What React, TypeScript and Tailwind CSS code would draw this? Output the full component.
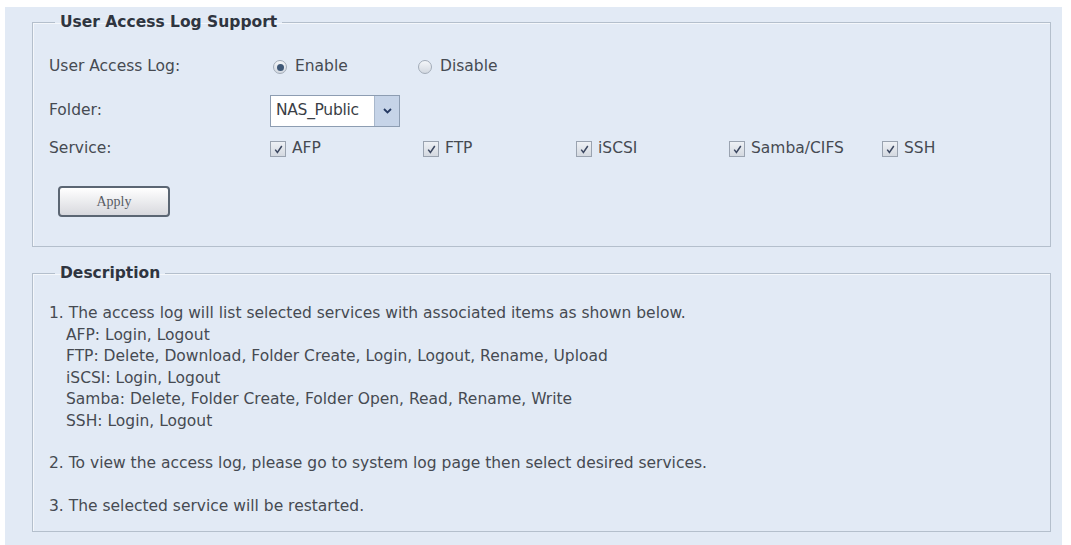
import React from "react";

const font = { fontFamily: '"DejaVu Sans", Tahoma, sans-serif' };

function Radio({ checked }: { checked?: boolean }) {
    return (
        <span className="w-[14px] h-[14px] rounded-full border border-[#a3acb8] bg-gradient-to-b from-[#f4f6f9] to-[#d3d9e1] flex items-center justify-center">
            {checked && <span className="w-[7px] h-[7px] rounded-full bg-[#3f5877]" />}
        </span>
    );
}

function Check() {
    return (
        <span className="w-[16px] h-[16px] border border-[#9aa3b0] bg-gradient-to-b from-[#eef1f5] to-[#d4d9e0] flex items-center justify-center">
            <svg width="11" height="11" viewBox="0 0 11 11">
                <path d="M2.2 5.6 L4.4 8.4 L8.8 2" fill="none" stroke="#3b4760" strokeWidth="1.5" />
            </svg>
        </span>
    );
}

const services = ["AFP", "FTP", "iSCSI", "Samba/CIFS", "SSH"];

export default function App() {
    return (
        <div className="w-full h-[545px] bg-white pt-[7px] pl-[5px] pr-[9px] text-[#464a52]" style={font}>
            <div className="h-full bg-[#e2eaf5] pl-[27px] pr-[11px] pt-[6px] text-[15.5px]">

                {/* User Access Log Support */}
                <fieldset className="h-[234px] border border-[#b4bfcc] shadow-[inset_1px_1px_0_#f4f7fb] pl-[16px]">
                    <legend className="ml-[6px] px-[5px] font-bold text-[#2f3540] leading-[18px] text-[15.5px]">
                        User Access Log Support
                    </legend>

                    <div className="flex items-center h-[30px] mt-[21px]">
                        <span className="w-[224px]">User Access Log:</span>
                        <label className="w-[145px] flex items-center gap-[8px]">
                            <Radio checked /> Enable
                        </label>
                        <label className="flex items-center gap-[8px]">
                            <Radio /> Disable
                        </label>
                    </div>

                    <div className="flex items-center h-[32px] mt-[13px]">
                        <span className="w-[221px]">Folder:</span>
                        <div className="flex h-[32px] border border-[#8d9db2]">
                            <span className="w-[103px] bg-white flex items-center pl-[5px] text-[#3a3e46] tracking-[-0.3px] overflow-hidden whitespace-nowrap">NAS_Public</span>
                            <span className="w-[25px] bg-[#c6d4e8] border-l border-[#a9b8cc] flex items-center justify-center">
                                <svg width="9" height="6" viewBox="0 0 9 6">
                                    <path d="M1 1 L4.5 4.5 L8 1" fill="none" stroke="#263a63" strokeWidth="1.8" />
                                </svg>
                            </span>
                        </div>
                    </div>

                    <div className="flex items-center h-[22px] mt-[11px]">
                        <span className="w-[221px]">Service:</span>
                        {services.map((s) => (
                            <label key={s} className="w-[153px] flex items-center gap-[6px]">
                                <Check /> {s}
                            </label>
                        ))}
                    </div>

                    <button className="mt-[26px] ml-[9px] w-[112px] h-[31px] rounded-[4px] border-2 border-[#5b6673] bg-gradient-to-b from-white to-[#d8d9de] text-[#585c64] text-[14px]" style={{ fontFamily: '"Liberation Serif", serif' }}>
                        Apply
                    </button>
                </fieldset>

                {/* Description */}
                <fieldset className="mt-[17px] h-[268px] border border-[#b4bfcc] shadow-[inset_1px_1px_0_#f4f7fb] pl-[16px] leading-[21.5px]">
                    <legend className="ml-[6px] px-[5px] font-bold text-[#2f3540] leading-[18px] text-[15.5px]">
                        Description
                    </legend>
                    <div className="mt-[21px]">
                        <p>1. The access log will list selected services with associated items as shown below.</p>
                        <div className="pl-[17px]">
                            <p>AFP: Login, Logout</p>
                            <p>FTP: Delete, Download, Folder Create, Login, Logout, Rename, Upload</p>
                            <p>iSCSI: Login, Logout</p>
                            <p>Samba: Delete, Folder Create, Folder Open, Read, Rename, Write</p>
                            <p>SSH: Login, Logout</p>
                        </div>
                        <p className="mt-[21px]">2. To view the access log, please go to system log page then select desired services.</p>
                        <p className="mt-[21px]">3. The selected service will be restarted.</p>
                    </div>
                </fieldset>
            </div>
        </div>
    );
}
